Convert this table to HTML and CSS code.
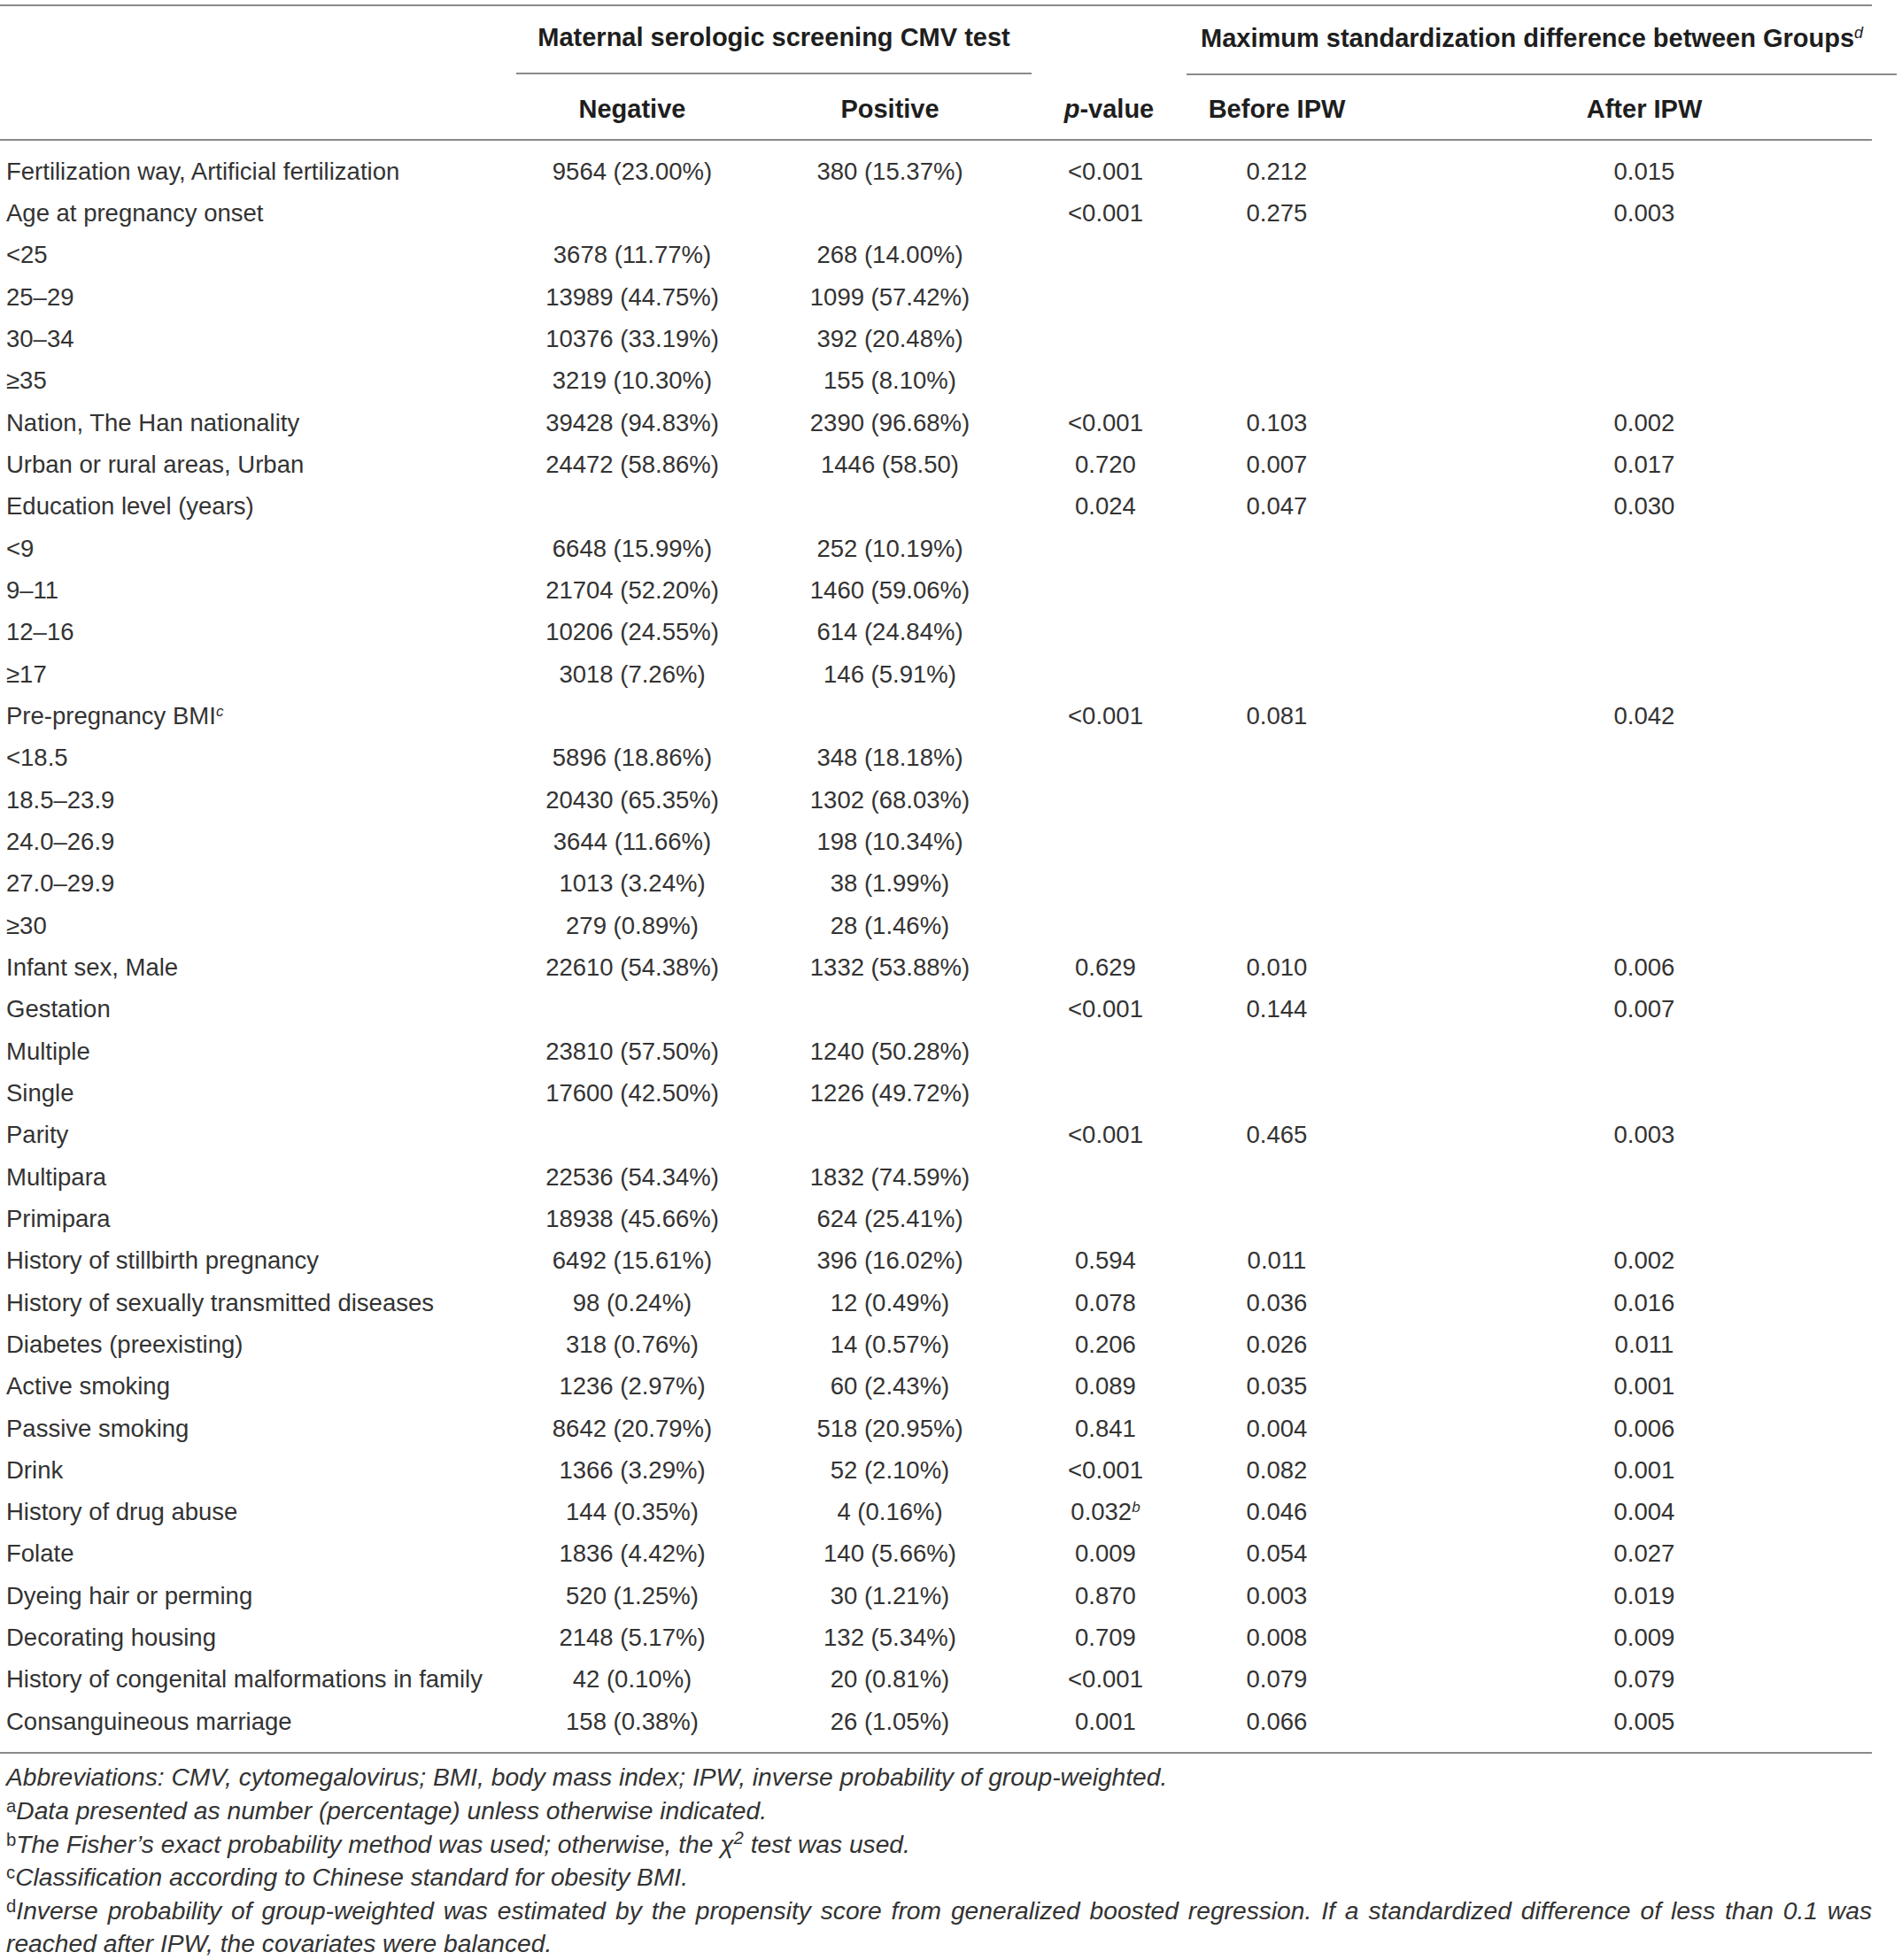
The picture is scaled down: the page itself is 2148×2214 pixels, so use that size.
FILE: index.html
```html
<!DOCTYPE html>
<html>
<head>
<meta charset="utf-8">
<link rel="stylesheet" href="styles.css">
</head>
<body>
<div class="wrap">
<table class="tbl">
<colgroup>
<col class="c-label"><col class="c-neg"><col class="c-pos"><col class="c-p"><col class="c-before"><col class="c-after">
</colgroup>
<thead>
<tr class="h1">
<th></th>
<th colspan="2" class="grp"><span>Maternal serologic screening CMV test</span></th>
<th></th>
<th colspan="2" class="grp grp2"><div class="grp2-line">Maximum standardization difference between Groups<sup class="it">d</sup></div></th>
</tr>
<tr class="h2">
<th></th>
<th>Negative</th>
<th>Positive</th>
<th class="pvh"><i>p</i>-value</th>
<th>Before IPW</th>
<th class="after">After IPW</th>
</tr>
</thead>
<tbody>
<tr class="first"><td>Fertilization way, Artificial fertilization</td><td>9564 (23.00%)</td><td>380 (15.37%)</td><td class="pv">&lt;0.001</td><td>0.212</td><td class="after">0.015</td></tr>
<tr><td>Age at pregnancy onset</td><td></td><td></td><td class="pv">&lt;0.001</td><td>0.275</td><td class="after">0.003</td></tr>
<tr><td>&lt;25</td><td>3678 (11.77%)</td><td>268 (14.00%)</td><td class="pv"></td><td></td><td class="after"></td></tr>
<tr><td>25–29</td><td>13989 (44.75%)</td><td>1099 (57.42%)</td><td class="pv"></td><td></td><td class="after"></td></tr>
<tr><td>30–34</td><td>10376 (33.19%)</td><td>392 (20.48%)</td><td class="pv"></td><td></td><td class="after"></td></tr>
<tr><td>≥35</td><td>3219 (10.30%)</td><td>155 (8.10%)</td><td class="pv"></td><td></td><td class="after"></td></tr>
<tr><td>Nation, The Han nationality</td><td>39428 (94.83%)</td><td>2390 (96.68%)</td><td class="pv">&lt;0.001</td><td>0.103</td><td class="after">0.002</td></tr>
<tr><td>Urban or rural areas, Urban</td><td>24472 (58.86%)</td><td>1446 (58.50)</td><td class="pv">0.720</td><td>0.007</td><td class="after">0.017</td></tr>
<tr><td>Education level (years)</td><td></td><td></td><td class="pv">0.024</td><td>0.047</td><td class="after">0.030</td></tr>
<tr><td>&lt;9</td><td>6648 (15.99%)</td><td>252 (10.19%)</td><td class="pv"></td><td></td><td class="after"></td></tr>
<tr><td>9–11</td><td>21704 (52.20%)</td><td>1460 (59.06%)</td><td class="pv"></td><td></td><td class="after"></td></tr>
<tr><td>12–16</td><td>10206 (24.55%)</td><td>614 (24.84%)</td><td class="pv"></td><td></td><td class="after"></td></tr>
<tr><td>≥17</td><td>3018 (7.26%)</td><td>146 (5.91%)</td><td class="pv"></td><td></td><td class="after"></td></tr>
<tr><td>Pre-pregnancy BMI<sup class="it">c</sup></td><td></td><td></td><td class="pv">&lt;0.001</td><td>0.081</td><td class="after">0.042</td></tr>
<tr><td>&lt;18.5</td><td>5896 (18.86%)</td><td>348 (18.18%)</td><td class="pv"></td><td></td><td class="after"></td></tr>
<tr><td>18.5–23.9</td><td>20430 (65.35%)</td><td>1302 (68.03%)</td><td class="pv"></td><td></td><td class="after"></td></tr>
<tr><td>24.0–26.9</td><td>3644 (11.66%)</td><td>198 (10.34%)</td><td class="pv"></td><td></td><td class="after"></td></tr>
<tr><td>27.0–29.9</td><td>1013 (3.24%)</td><td>38 (1.99%)</td><td class="pv"></td><td></td><td class="after"></td></tr>
<tr><td>≥30</td><td>279 (0.89%)</td><td>28 (1.46%)</td><td class="pv"></td><td></td><td class="after"></td></tr>
<tr><td>Infant sex, Male</td><td>22610 (54.38%)</td><td>1332 (53.88%)</td><td class="pv">0.629</td><td>0.010</td><td class="after">0.006</td></tr>
<tr><td>Gestation</td><td></td><td></td><td class="pv">&lt;0.001</td><td>0.144</td><td class="after">0.007</td></tr>
<tr><td>Multiple</td><td>23810 (57.50%)</td><td>1240 (50.28%)</td><td class="pv"></td><td></td><td class="after"></td></tr>
<tr><td>Single</td><td>17600 (42.50%)</td><td>1226 (49.72%)</td><td class="pv"></td><td></td><td class="after"></td></tr>
<tr><td>Parity</td><td></td><td></td><td class="pv">&lt;0.001</td><td>0.465</td><td class="after">0.003</td></tr>
<tr><td>Multipara</td><td>22536 (54.34%)</td><td>1832 (74.59%)</td><td class="pv"></td><td></td><td class="after"></td></tr>
<tr><td>Primipara</td><td>18938 (45.66%)</td><td>624 (25.41%)</td><td class="pv"></td><td></td><td class="after"></td></tr>
<tr><td>History of stillbirth pregnancy</td><td>6492 (15.61%)</td><td>396 (16.02%)</td><td class="pv">0.594</td><td>0.011</td><td class="after">0.002</td></tr>
<tr><td>History of sexually transmitted diseases</td><td>98 (0.24%)</td><td>12 (0.49%)</td><td class="pv">0.078</td><td>0.036</td><td class="after">0.016</td></tr>
<tr><td>Diabetes (preexisting)</td><td>318 (0.76%)</td><td>14 (0.57%)</td><td class="pv">0.206</td><td>0.026</td><td class="after">0.011</td></tr>
<tr><td>Active smoking</td><td>1236 (2.97%)</td><td>60 (2.43%)</td><td class="pv">0.089</td><td>0.035</td><td class="after">0.001</td></tr>
<tr><td>Passive smoking</td><td>8642 (20.79%)</td><td>518 (20.95%)</td><td class="pv">0.841</td><td>0.004</td><td class="after">0.006</td></tr>
<tr><td>Drink</td><td>1366 (3.29%)</td><td>52 (2.10%)</td><td class="pv">&lt;0.001</td><td>0.082</td><td class="after">0.001</td></tr>
<tr><td>History of drug abuse</td><td>144 (0.35%)</td><td>4 (0.16%)</td><td class="pv">0.032<sup class="it">b</sup></td><td>0.046</td><td class="after">0.004</td></tr>
<tr><td>Folate</td><td>1836 (4.42%)</td><td>140 (5.66%)</td><td class="pv">0.009</td><td>0.054</td><td class="after">0.027</td></tr>
<tr><td>Dyeing hair or perming</td><td>520 (1.25%)</td><td>30 (1.21%)</td><td class="pv">0.870</td><td>0.003</td><td class="after">0.019</td></tr>
<tr><td>Decorating housing</td><td>2148 (5.17%)</td><td>132 (5.34%)</td><td class="pv">0.709</td><td>0.008</td><td class="after">0.009</td></tr>
<tr><td>History of congenital malformations in family</td><td>42 (0.10%)</td><td>20 (0.81%)</td><td class="pv">&lt;0.001</td><td>0.079</td><td class="after">0.079</td></tr>
<tr class="last"><td>Consanguineous marriage</td><td>158 (0.38%)</td><td>26 (1.05%)</td><td class="pv">0.001</td><td>0.066</td><td class="after">0.005</td></tr>
</tbody>
</table>
<div class="notes">
<p><i>Abbreviations: CMV, cytomegalovirus; BMI, body mass index; IPW, inverse probability of group-weighted.</i></p>
<p><sup>a</sup><i>Data presented as number (percentage) unless otherwise indicated.</i></p>
<p><sup>b</sup><i>The Fisher’s exact probability method was used; otherwise, the χ<sup class="chi">2</sup> test was used.</i></p>
<p><sup>c</sup><i>Classification according to Chinese standard for obesity BMI.</i></p>
<p class="just"><sup>d</sup><i>Inverse probability of group-weighted was estimated by the propensity score from generalized boosted regression. If a standardized difference of less than 0.1 was reached after IPW, the covariates were balanced.</i></p>
</div>
</div>
</body>
</html>
```
FILE: styles.css
```css
html, body {
  margin: 0;
  padding: 0;
  background: #ffffff;
}
body {
  font-family: "Liberation Sans", Arial, sans-serif;
  color: #333333;
}
.wrap {
  width: 2114px;
  padding-top: 5px;
}
.tbl {
  width: 2114px;
  border-collapse: collapse;
  table-layout: fixed;
  font-size: 27.5px;
}
.c-label { width: 583px; }
.c-neg { width: 262px; }
.c-pos { width: 320px; }
.c-p { width: 175px; }
.c-before { width: 204px; }
.c-after { width: 570px; }

.tbl th {
  font-weight: bold;
  color: #1e1e1e;
  text-align: center;
  font-size: 29px;
  padding: 0;
  vertical-align: middle;
}
.tbl thead tr.h1 th {
  border-top: 2px solid #8a8a8a;
  height: 75px;
}
.tbl thead tr.h1 th span {
  display: inline-block;
  position: relative;
  top: -2px;
}
.tbl thead th.grp {
  border-bottom: 2px solid #8a8a8a;
}
.tbl thead th.grp2 {
  border-bottom: none;
  text-align: left;
}
.grp2-line {
  margin-right: -28px;
  padding-left: 16px;
  height: 77px;
  line-height: 71px;
  border-bottom: 2px solid #8a8a8a;
  box-sizing: border-box;
  margin-bottom: -2px;
}
.tbl thead tr.h2 th {
  height: 67px;
  padding-top: 6px;
  border-bottom: 2px solid #8a8a8a;
}
.tbl td {
  height: 47.33px;
  padding: 0;
  text-align: center;
  vertical-align: middle;
  white-space: nowrap;
}
.tbl td:first-child {
  text-align: left;
  padding-left: 7px;
}
.tbl .pv {
  padding-right: 8px;
}
.tbl thead tr.h2 th.after,
.tbl .after {
  padding-left: 56px;
}
.tbl tr.first td {
  padding-top: 11px;
}
.tbl tr.last td {
  padding-bottom: 11px;
  border-bottom: 2px solid #8a8a8a;
}

sup {
  font-size: 0.62em;
  line-height: 0;
  vertical-align: 0.55em;
}
sup.it {
  font-style: italic;
  font-weight: normal;
}

.notes {
  padding-top: 8px;
  font-size: 28.2px;
  color: #333333;
}
.notes p {
  margin: 0;
  line-height: 37.6px;
  padding-left: 7px;
}
.notes p.just {
  text-align: justify;
}
.notes sup {
  font-size: 0.72em;
  vertical-align: 0.4em;
}
.notes sup.chi {
  font-size: 0.72em;
  vertical-align: 0.5em;
}
```
